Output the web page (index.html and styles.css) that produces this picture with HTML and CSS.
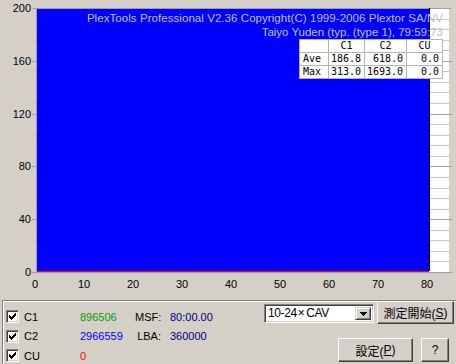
FILE: index.html
```html
<!DOCTYPE html>
<html>
<head>
<meta charset="utf-8">
<link rel="stylesheet" href="styles.css">
</head>
<body>
<div class="chart">
  <svg class="plot" width="456" height="300" viewBox="0 0 456 300" shape-rendering="crispEdges">
    <rect x="37" y="9" width="412" height="263" fill="#fff"/>
    <g fill="#c8c8c8">
      <rect x="430" y="261" width="19" height="1"/>
      <rect x="430" y="251" width="19" height="1"/>
      <rect x="430" y="240" width="19" height="1"/>
      <rect x="430" y="230" width="19" height="1"/>
      <rect x="430" y="209" width="19" height="1"/>
      <rect x="430" y="198" width="19" height="1"/>
      <rect x="430" y="188" width="19" height="1"/>
      <rect x="430" y="177" width="19" height="1"/>
      <rect x="430" y="156" width="19" height="1"/>
      <rect x="430" y="145" width="19" height="1"/>
      <rect x="430" y="135" width="19" height="1"/>
      <rect x="430" y="124" width="19" height="1"/>
      <rect x="430" y="103" width="19" height="1"/>
      <rect x="430" y="92" width="19" height="1"/>
      <rect x="430" y="82" width="19" height="1"/>
      <rect x="430" y="71" width="19" height="1"/>
      <rect x="430" y="50" width="19" height="1"/>
      <rect x="430" y="40" width="19" height="1"/>
      <rect x="430" y="29" width="19" height="1"/>
      <rect x="430" y="19" width="19" height="1"/>
    </g>
    <g fill="#a0a0a0">
      <rect x="430" y="219" width="22" height="1"/>
      <rect x="430" y="166" width="22" height="1"/>
      <rect x="430" y="114" width="22" height="1"/>
      <rect x="430" y="61" width="22" height="1"/>
      <rect x="33" y="8" width="418" height="1"/>
      <rect x="36" y="8" width="1" height="265"/>
      <rect x="36" y="272" width="416" height="1"/>
      <rect x="32" y="219" width="4" height="1"/>
      <rect x="32" y="166" width="4" height="1"/>
      <rect x="32" y="114" width="4" height="1"/>
      <rect x="32" y="61" width="4" height="1"/>
      <rect x="32" y="272" width="4" height="1"/>
    </g>
    <g fill="#b8b8b8">
      <rect x="34" y="261" width="2" height="1"/>
      <rect x="34" y="251" width="2" height="1"/>
      <rect x="34" y="240" width="2" height="1"/>
      <rect x="34" y="230" width="2" height="1"/>
      <rect x="34" y="209" width="2" height="1"/>
      <rect x="34" y="198" width="2" height="1"/>
      <rect x="34" y="188" width="2" height="1"/>
      <rect x="34" y="177" width="2" height="1"/>
      <rect x="34" y="156" width="2" height="1"/>
      <rect x="34" y="145" width="2" height="1"/>
      <rect x="34" y="135" width="2" height="1"/>
      <rect x="34" y="124" width="2" height="1"/>
      <rect x="34" y="103" width="2" height="1"/>
      <rect x="34" y="92" width="2" height="1"/>
      <rect x="34" y="82" width="2" height="1"/>
      <rect x="34" y="71" width="2" height="1"/>
      <rect x="34" y="50" width="2" height="1"/>
      <rect x="34" y="40" width="2" height="1"/>
      <rect x="34" y="29" width="2" height="1"/>
      <rect x="34" y="19" width="2" height="1"/>
    </g>
    <rect x="37" y="9" width="392" height="262" fill="#0000ff"/>
    <rect x="37" y="271" width="392" height="1" fill="#ff0000"/>
    <rect x="429" y="8" width="1" height="263" fill="#000"/>
    <g class="ylab" text-anchor="end">
      <text x="31" y="12">200</text>
      <text x="31" y="65">160</text>
      <text x="31" y="118">120</text>
      <text x="31" y="170">80</text>
      <text x="31" y="223">40</text>
      <text x="31" y="276">0</text>
    </g>
    <g class="xlab" text-anchor="middle">
      <text x="35" y="288">0</text>
      <text x="84" y="288">10</text>
      <text x="133" y="288">20</text>
      <text x="182" y="288">30</text>
      <text x="231" y="288">40</text>
      <text x="280" y="288">50</text>
      <text x="329" y="288">60</text>
      <text x="378" y="288">70</text>
      <text x="427" y="288">80</text>
    </g>
  </svg>
  <div class="title">
    <div class="t1">PlexTools Professional V2.36 Copyright(C) 1999-2006 Plextor SA/NV</div>
    <div>Taiyo Yuden (typ. (type 1), 79:59:73</div>
  </div>
  <div class="stats">
    <div class="c"></div><div class="c h">C1</div><div class="c h">C2</div><div class="c h">CU</div>
    <div class="c l">Ave</div><div class="c n">186.8</div><div class="c n">618.0</div><div class="c n">0.0</div>
    <div class="c l">Max</div><div class="c n">313.0</div><div class="c n">1693.0</div><div class="c n">0.0</div>
  </div>
</div>
<div class="group">
  <div class="counts">
    <div class="chk"><svg width="9" height="9" viewBox="0 0 9 9" shape-rendering="crispEdges"><path d="M1 3h1v1h1v1h1v-1h1v-1h1v-1h1v-1h1v3h-1v1h-1v1h-1v1h-1v1h-1v-1h-1v-1h-1z"/></svg></div>
    <div class="lbl">C1</div>
    <div class="val green">896506</div>
    <div class="key">MSF:</div>
    <div class="val navy">80:00.00</div>

    <div class="chk"><svg width="9" height="9" viewBox="0 0 9 9" shape-rendering="crispEdges"><path d="M1 3h1v1h1v1h1v-1h1v-1h1v-1h1v-1h1v3h-1v1h-1v1h-1v1h-1v1h-1v-1h-1v-1h-1z"/></svg></div>
    <div class="lbl">C2</div>
    <div class="val blue">2966559</div>
    <div class="key">LBA:</div>
    <div class="val navy">360000</div>

    <div class="chk"><svg width="9" height="9" viewBox="0 0 9 9" shape-rendering="crispEdges"><path d="M1 3h1v1h1v1h1v-1h1v-1h1v-1h1v-1h1v3h-1v1h-1v1h-1v1h-1v1h-1v-1h-1v-1h-1z"/></svg></div>
    <div class="lbl">CU</div>
    <div class="val red">0</div>
    <div class="key"></div>
    <div class="val"></div>
  </div>
  <div class="controls">
    <div class="row1">
      <div class="combo">
        <span class="combo-text">10-24<span class="times">×</span>CAV</span>
        <span class="combo-btn"><svg width="7" height="4" viewBox="0 0 7 4" shape-rendering="crispEdges"><path d="M0 0h7v1h-1v1h-1v1h-1v1h-1v-1h-1v-1h-1v-1h-1z"/></svg></span>
      </div>
      <div class="btn start">測定開始(<u>S</u>)</div>
    </div>
    <div class="row2">
      <div class="btn setup">設定(<u>P</u>)</div>
      <div class="btn help">?</div>
    </div>
  </div>
</div>
</body>
</html>
```
FILE: styles.css
```css
html, body {
  margin: 0;
  padding: 0;
}
body {
  width: 456px;
  height: 364px;
  overflow: hidden;
  background: #d4d0c8;
  font-family: "Liberation Sans", Arial, sans-serif;
  font-size: 11px;
  color: #000;
}
.chart {
  position: relative;
  height: 300px;
}
.plot {
  display: block;
}
.plot text {
  font-family: "Liberation Sans", Arial, sans-serif;
  font-size: 11px;
  fill: #000;
}
.title {
  position: absolute;
  top: 11px;
  right: 13px;
  text-align: right;
  font-size: 11.5px;
  line-height: 14px;
  color: #c0c0c0;
  white-space: nowrap;
}
.t1 {
  letter-spacing: 0.06px;
}
.stats {
  position: absolute;
  left: 299px;
  top: 39px;
  display: grid;
  grid-template-columns: 28px 35px 41px 35px;
  grid-auto-rows: 12px;
  gap: 1px;
  padding: 1px;
  background: #b4b4b4;
  font-family: "DejaVu Sans Mono", "Liberation Mono", monospace;
  font-size: 10px;
  line-height: 12px;
}
.c {
  background: #fff;
  white-space: nowrap;
}
.h {
  text-align: center;
}
.l {
  padding-left: 3px;
}
.n {
  text-align: right;
  padding-right: 3px;
}
.group {
  margin-left: 2px;
  height: 70px;
  border: 1px solid #808080;
  border-right: none;
  box-shadow: inset 1px 1px #fff;
  display: flex;
  align-items: flex-start;
}
.counts {
  margin: 6px 0 0 3px;
  display: grid;
  grid-template-columns: 18px 56px 55px 26px 50px;
  grid-auto-rows: 19.5px;
  align-items: center;
  column-gap: 0;
}
.counts .key {
  text-align: right;
}
.counts .key + .val {
  padding-left: 9px;
}
.chk {
  width: 13px;
  height: 13px;
  box-sizing: border-box;
  background: #fff;
  border: 1px solid;
  border-color: #808080 #fff #fff #808080;
  box-shadow: inset 1px 1px #404040, inset -1px -1px #d4d0c8;
  padding: 1px;
  display: flex;
}
.chk svg {
  display: block;
  fill: #000;
}
.val, .lbl, .key {
  white-space: nowrap;
}
.green { color: #00a000; }
.blue { color: #0000ff; }
.red { color: #ff0000; }
.navy { color: #000080; }
.controls {
  margin-left: auto;
  display: flex;
  flex-direction: column;
  gap: 14px;
}
.row1 {
  display: flex;
  align-items: center;
  gap: 3px;
  height: 23px;
  padding-right: 2px;
}
.row2 {
  display: flex;
  justify-content: flex-end;
  gap: 8px;
  padding-right: 7px;
}
.combo {
  width: 110px;
  height: 19px;
  margin-top: 2px;
  box-sizing: border-box;
  background: #fff;
  border: 1px solid;
  border-color: #808080 #fff #fff #808080;
  box-shadow: inset 1px 1px #404040, inset -1px -1px #d4d0c8;
  padding: 2px;
  display: flex;
  align-items: stretch;
}
.combo-text {
  flex: 1;
  padding-left: 1px;
  font-family: "Liberation Sans", "Noto Sans CJK JP", sans-serif;
  font-size: 12px;
  line-height: 13px;
  letter-spacing: -0.4px;
}
.times {
  margin: 0 2px 0 1px;
}
.combo-btn {
  width: 16px;
  box-sizing: border-box;
  background: #d4d0c8;
  border: 1px solid;
  border-color: #d4d0c8 #404040 #404040 #d4d0c8;
  box-shadow: inset 1px 1px #fff, inset -1px -1px #808080;
  display: flex;
  align-items: center;
  justify-content: center;
}
.combo-btn svg {
  display: block;
  fill: #000;
}
.btn {
  box-sizing: border-box;
  height: 23px;
  border: 1px solid;
  border-color: #fff #404040 #404040 #fff;
  box-shadow: inset -1px -1px #808080;
  display: flex;
  align-items: center;
  justify-content: center;
  font-family: "Liberation Sans", "Noto Sans CJK JP", sans-serif;
  font-size: 12px;
  white-space: nowrap;
}
.start {
  width: 77px;
}
.setup {
  width: 75px;
  height: 24px;
}
.help {
  width: 28px;
  height: 24px;
}
```
